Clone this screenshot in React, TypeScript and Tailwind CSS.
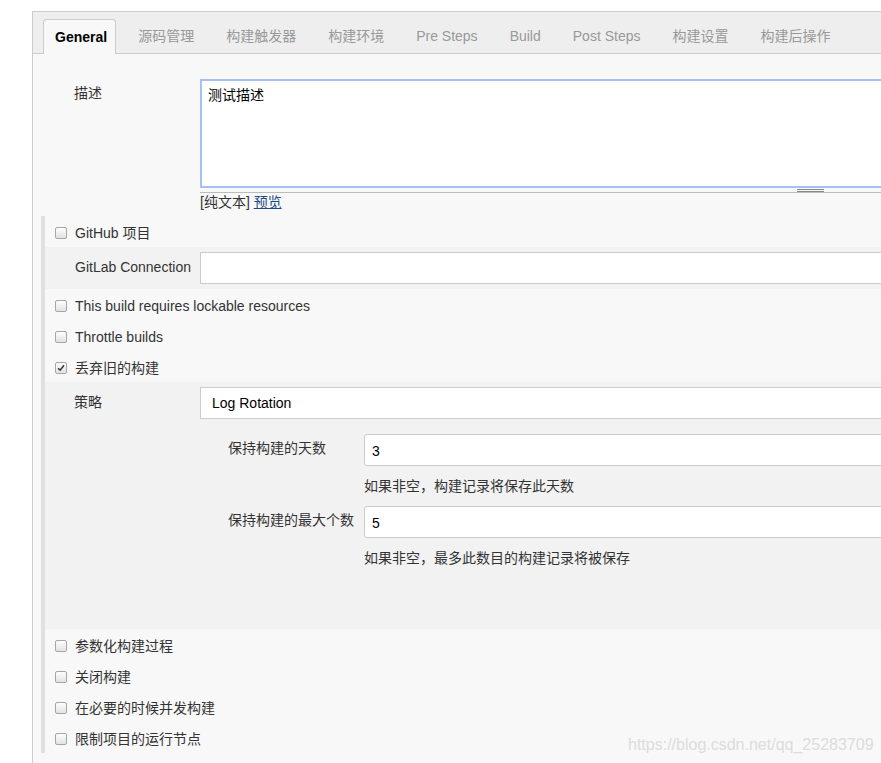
import type { ReactNode } from "react";

const tabs = ["General", "源码管理", "构建触发器", "构建环境", "Pre Steps", "Build", "Post Steps", "构建设置", "构建后操作"];

// 小さなチェックボックス（Jenkins風）
function Box({ checked = false }: { checked?: boolean }) {
  return (
    <span className="relative flex h-[12px] w-[12px] shrink-0 items-center justify-center rounded-[2px] border border-[#a6a6a6] bg-gradient-to-b from-[#fdfdfd] to-[#e2e2e2]">
      {checked && (
        <svg viewBox="0 0 12 12" className="h-[10px] w-[10px]">
          <path d="M2.5 6.2 L5 8.6 L9.6 2.8" fill="none" stroke="#333" strokeWidth="1.8" />
        </svg>
      )}
    </span>
  );
}

function CheckRow({ children, checked }: { children: ReactNode; checked?: boolean }) {
  return (
    <div className="flex h-[31px] items-center gap-[8px] pl-[10px] pt-[2px]">
      <Box checked={checked} />
      <span>{children}</span>
    </div>
  );
}

export default function App() {
  return (
    <div
      className="relative h-[763px] w-[881px] overflow-hidden bg-white text-[14px] leading-[20px] text-[#333]"
      style={{ fontFamily: '"Liberation Sans", Arial, "Noto Sans CJK SC", sans-serif' }}
    >
      <div className="ml-8 mt-[11px] w-[900px] border-l border-t border-[#ccc] bg-[#f8f8f8] pb-10">
        {/* tabs */}
        <div className="flex h-[42px] items-end gap-2 border-b border-[#ccc] bg-[#eee] pl-[10px]">
          {tabs.map((t, i) =>
            i === 0 ? (
              <div
                key={t}
                className="relative -mb-px mr-[2px] flex h-[35px] items-center rounded-t-[4px] border border-b-0 border-[#ccc] bg-[#f8f8f8] pl-[11px] pr-[8px] font-bold text-black"
              >
                {t}
              </div>
            ) : (
              <div key={t} className="flex h-[35px] items-center px-3 text-[#999]">
                {t}
              </div>
            )
          )}
        </div>

        {/* description */}
        <div className="flex pt-[25px]">
          <div className="w-[167px] shrink-0 pl-[41px] pt-[4px]">描述</div>
          <div className="flex-1">
            <div className="h-[109px] border-2 border-[#a3c1f3] bg-white px-[6px] pt-[4px] text-black">测试描述</div>
            <div className="relative h-[5px] border-b border-[#bbb]">
              <div className="absolute left-[597px] top-[1px] h-[3px] w-[27px] border-b border-t border-[#888]" />
            </div>
            <div className="leading-[19px]">
              [纯文本] <span className="text-[#204a87] underline">预览</span>
            </div>
          </div>
        </div>

        {/* options */}
        <div className="ml-[8px] mt-[4px] border-l-4 border-[#e0e0e0]">
          <CheckRow>GitHub 项目</CheckRow>
          <div className="flex h-[42px] items-center bg-[#f2f2f2]">
            <div className="w-[155px] shrink-0 pl-[30px] pb-[2px]">GitLab Connection</div>
            <div className="h-[32px] flex-1 border border-[#ccc] bg-white" />
          </div>
          <CheckRow>This build requires lockable resources</CheckRow>
          <CheckRow>Throttle builds</CheckRow>
          <CheckRow checked>丢弃旧的构建</CheckRow>

          <div className="h-[247px] bg-[#f2f2f2] pt-[5px]">
            <div className="flex">
              <div className="w-[155px] shrink-0 pl-[29px] pt-[5px]">策略</div>
              <div className="flex h-[32px] flex-1 items-center border border-[#ccc] bg-white pl-[11px] text-black">
                Log Rotation
              </div>
            </div>
            <div className="pl-[183px]">
              <div className="mt-[15px] flex">
                <div className="w-[136px] shrink-0 pt-[4px]">保持构建的天数</div>
                <div className="flex h-[32px] flex-1 items-center rounded-[3px] border border-[#ccc] bg-white px-[7px] pt-[2px] text-black">
                  3
                </div>
              </div>
              <div className="mt-[10px] pl-[136px]">如果非空，构建记录将保存此天数</div>
              <div className="mt-[10px] flex">
                <div className="w-[136px] shrink-0 pt-[4px]">保持构建的最大个数</div>
                <div className="flex h-[32px] flex-1 items-center rounded-[3px] border border-[#ccc] bg-white px-[7px] pt-[2px] text-black">
                  5
                </div>
              </div>
              <div className="mt-[10px] pl-[136px]">如果非空，最多此数目的构建记录将被保存</div>
            </div>
          </div>

          <CheckRow>参数化构建过程</CheckRow>
          <CheckRow>关闭构建</CheckRow>
          <CheckRow>在必要的时候并发构建</CheckRow>
          <CheckRow>限制项目的运行节点</CheckRow>
        </div>
      </div>

      <div className="absolute left-[628px] top-[734px] text-[16px] leading-[22px] text-[#dcdcdc]">
        https://blog.csdn.net/qq_25283709
      </div>
    </div>
  );
}
